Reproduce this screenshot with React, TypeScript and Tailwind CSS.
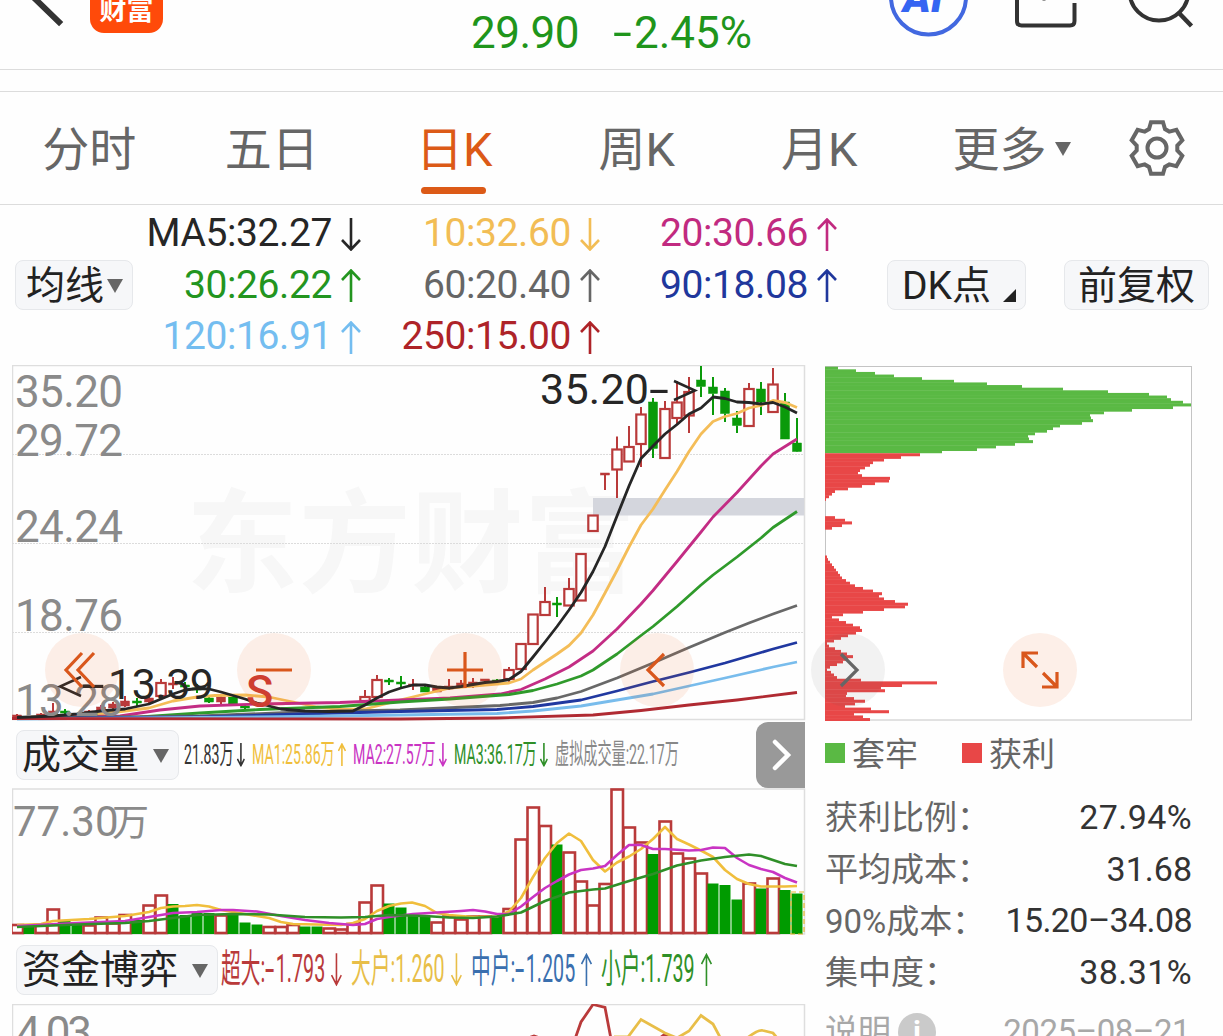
import clsx from "clsx";
import type { ReactNode } from "react";

type Point = [number, number];

// [x, body top, body bottom, high, low, kind]: r = hollow red, s = solid red, g = green
type Candle = [number, number, number, number, number, "r" | "g" | "s"];

const RED = "#b93a3a";
const GREEN = "#0a9a0a";

const tabs = ["分时", "五日", "日K", "周K", "月K"];

const averages = [
  { label: "MA5:32.27", up: false, color: "text-[#262626]" },
  { label: "10:32.60", up: false, color: "text-[#f2bd55]" },
  { label: "20:30.66", up: true, color: "text-[#c12a80]" },
  { label: "30:26.22", up: true, color: "text-[#23951f]" },
  { label: "60:20.40", up: true, color: "text-[#666666]" },
  { label: "90:18.08", up: true, color: "text-[#20379c]" },
  { label: "120:16.91", up: true, color: "text-[#74bdf0]" },
  { label: "250:15.00", up: true, color: "text-[#ae2328]" },
];

const candles: Candle[] = [
  [17, 715, 717, 714, 718, "s"],
  [41, 714, 717, 713, 718, "s"],
  [53, 711, 714, 703, 716, "s"],
  [65, 711, 713, 709, 715, "g"],
  [89, 711, 713, 710, 714, "s"],
  [101, 707, 710, 705, 711, "s"],
  [113, 704, 708, 702, 710, "s"],
  [125, 701, 706, 696, 707, "s"],
  [137, 701, 703, 698, 706, "g"],
  [149, 698, 702, 696, 704, "s"],
  [161, 683, 696, 679, 696, "r"],
  [173, 683, 685, 677, 689, "s"],
  [185, 685, 687, 682, 691, "g"],
  [197, 688, 690, 684, 693, "g"],
  [209, 698, 702, 695, 703, "g"],
  [221, 697, 702, 696, 704, "s"],
  [233, 697, 704, 696, 706, "g"],
  [245, 706, 708, 704, 709, "g"],
  [365, 697, 701, 690, 702, "r"],
  [377, 680, 697, 675, 698, "r"],
  [389, 680, 682, 678, 685, "g"],
  [401, 682, 684, 676, 688, "g"],
  [413, 684, 686, 679, 690, "s"],
  [425, 687, 692, 685, 692, "g"],
  [437, 688, 692, 686, 692, "s"],
  [449, 686, 689, 679, 690, "s"],
  [461, 683, 687, 680, 688, "s"],
  [473, 682, 684, 678, 688, "s"],
  [485, 679, 681, 679, 684, "s"],
  [497, 680, 682, 679, 682, "g"],
  [509, 670, 679, 667, 682, "r"],
  [521, 644, 669, 644, 669, "r"],
  [533, 614.5, 644, 614, 644, "r"],
  [545, 602, 615, 587, 615, "r"],
  [557, 603, 605, 597, 617, "g"],
  [569, 589, 605.5, 578, 606, "r"],
  [581, 554, 600.5, 554, 600, "r"],
  [593, 515.5, 531, 515, 531, "r"],
  [605, 473, 475, 474, 490, "s"],
  [617, 449.5, 469.5, 436.5, 498, "r"],
  [629, 447, 461.5, 426, 461, "r"],
  [641, 414.5, 444, 407, 467, "r"],
  [653, 402, 448.5, 398, 458, "g"],
  [665, 409, 458, 401, 458, "r"],
  [677, 402.5, 418, 381, 424, "r"],
  [689, 392, 415.5, 377, 433, "r"],
  [701, 380, 386.5, 366, 397, "g"],
  [713, 387, 393.5, 377, 415, "g"],
  [725, 391, 413.5, 388, 422, "g"],
  [737, 418, 425.5, 411, 433, "g"],
  [749, 389, 426, 383, 426, "r"],
  [761, 389, 402, 382, 415, "g"],
  [773, 384.5, 412, 368, 412, "r"],
  [785, 402, 439, 393, 439, "g"],
  [797, 443, 451.5, 418, 451, "g"],
];

const priceLines: { color: string; points: Point[] }[] = [
  {
    color: "#f4bd58",
    points: [[17, 718], [101, 714], [149, 708], [173, 701], [197, 697], [215, 695.5], [245, 695], [269, 697], [293, 702], [317, 707], [341, 709.5], [365, 709], [389, 703], [400, 700], [425, 694], [450, 688], [509, 683], [521, 679], [533, 670], [545, 662], [557, 654], [569, 645.5], [581, 633], [593, 615], [605, 593], [617, 570.5], [629, 547], [641, 525], [653, 509], [665, 490], [677, 471.5], [689, 451.5], [701, 434], [713, 421.5], [725, 416.5], [737, 413.5], [749, 408], [761, 405.5], [773, 400.5], [785, 402.5], [797, 407.5]],
  },
  {
    color: "#c32c84",
    points: [[17, 718], [120, 716], [160, 710], [200, 706], [260, 704], [340, 702.5], [400, 700], [450, 698], [500, 694], [521, 689.5], [545, 679], [569, 667], [593, 651], [617, 629], [641, 604], [653, 590.5], [677, 561.5], [701, 532], [713, 517], [737, 492.5], [761, 466], [773, 454], [785, 446.5], [797, 439]],
  },
  {
    color: "#2f9a2b",
    points: [[17, 718], [140, 717], [200, 713], [260, 709.5], [340, 706.5], [400, 702], [450, 699], [509, 694.5], [533, 690.5], [557, 684], [581, 676], [593, 670], [617, 654], [641, 635.5], [653, 626.5], [677, 606.5], [701, 585], [713, 575], [737, 557], [761, 538], [773, 527.5], [797, 511.5]],
  },
  {
    color: "#686868",
    points: [[17, 718.5], [200, 716], [300, 712], [400, 710], [500, 705.5], [533, 702.5], [557, 698], [581, 691.5], [617, 678], [653, 663], [689, 647.5], [725, 632.5], [749, 623], [773, 614], [797, 605.5]],
  },
  {
    color: "#2038a0",
    points: [[17, 718.5], [200, 717], [300, 714], [400, 711.5], [497, 709.5], [533, 706.5], [581, 700], [617, 691], [653, 681.5], [689, 672.5], [725, 663], [773, 649], [797, 642.5]],
  },
  {
    color: "#78bcec",
    points: [[17, 719], [300, 716.5], [400, 715], [497, 713.5], [533, 711], [581, 706], [617, 700], [653, 694], [725, 678], [773, 667], [797, 662]],
  },
  {
    color: "#b02a32",
    points: [[12, 718.5], [400, 719], [497, 718], [593, 715], [641, 710.5], [689, 705], [737, 700], [797, 692.5]],
  },
  {
    color: "#262626",
    points: [[17, 717.5], [53, 716], [77, 714], [101, 711], [125, 709], [149, 704], [161, 699], [173, 694], [185, 690], [197, 688.5], [209, 689], [221, 692], [245, 699], [257, 703], [281, 709], [305, 711], [329, 711.5], [353, 711], [365, 705], [377, 698], [389, 692], [401, 688], [413, 685], [425, 685], [437, 687], [449, 688], [461, 686.5], [473, 684.5], [485, 682.5], [497, 681.5], [509, 679.5], [521, 671.5], [533, 657], [545, 642], [557, 626.5], [569, 610], [581, 592.5], [593, 571.5], [605, 546.5], [617, 516], [629, 486], [641, 458.5], [653, 446], [665, 434], [677, 424.5], [689, 414], [701, 408], [713, 397], [725, 398.5], [737, 402], [749, 402.5], [761, 404], [773, 402.5], [785, 407], [797, 413]],
  },
];

// top edge of each volume bar, 12px apart
const volumeTops = [
  923.5, 927, 923, 908, 920, 924, 924, 916, 922, 913.5, 920, 904, 894, 904, 915, 913, 913, 914, 915, 922.5, 924.5,
  925.5, 925.5, 923.5, 926.5, 926.5, 927, 928, 922.5, 901, 884, 903.5, 907.5, 915, 916.5, 921, 915, 918, 915, 915,
  916.5, 907.5, 838, 806, 824.5, 844.5, 851, 880, 904, 882.5, 788, 826, 841, 854, 820, 852, 857, 872, 883.5, 885,
  899.5, 882, 888.5, 877, 890, 893.5,
];
const volumeColors = "rgrrggrrrrgrrgggg" + "rgggrrrggrrrrr" + "ggggrrrrrgrrrrgrrrrrrrgrrrrgggrgrgg";

const volumeLines: { color: string; points: Point[] }[] = [
  {
    color: "#f0be3c",
    points: [[17, 925], [41, 924], [53, 921], [89, 919], [125, 916], [149, 912], [161, 908], [173, 906.5], [185, 906], [197, 905], [209, 906.5], [221, 910], [245, 914], [257, 916], [269, 918], [281, 922], [293, 924], [341, 925], [353, 923], [365, 919], [377, 911], [389, 906], [401, 903.5], [412, 902.5], [425, 906], [437, 913], [449, 915], [473, 917], [497, 916.5], [509, 911.5], [521, 898], [533, 877], [545, 858], [557, 843], [569, 833.5], [581, 841], [593, 860], [605, 871.5], [617, 862.5], [629, 856.5], [641, 849], [653, 839], [665, 827], [677, 839], [689, 844.5], [701, 850.5], [713, 857], [725, 870], [737, 879], [749, 884], [761, 886.5], [785, 886.5], [797, 886]],
  },
  {
    color: "#c934c3",
    points: [[17, 926], [77, 923], [125, 921], [149, 917], [173, 913], [197, 912], [221, 910], [233, 910], [257, 911.5], [281, 916], [305, 920], [329, 923], [353, 925], [365, 924], [377, 919], [389, 917], [413, 914], [437, 912.5], [461, 911], [473, 910], [485, 911.5], [497, 914], [509, 914], [521, 906.5], [533, 897], [545, 888], [557, 881], [569, 874.5], [581, 870], [593, 868.5], [605, 866], [617, 855], [629, 845], [641, 845], [653, 849], [665, 849], [689, 850.5], [701, 850], [713, 847.5], [725, 848], [737, 858], [749, 865], [761, 869], [773, 872], [785, 878], [797, 882.5]],
  },
  {
    color: "#2f8f28",
    points: [[17, 927], [77, 924.5], [125, 923], [149, 921], [173, 918], [197, 915], [233, 914], [269, 914.5], [305, 917], [341, 917.5], [365, 917], [389, 915], [425, 916], [449, 917.5], [473, 918], [497, 916.5], [521, 912.5], [545, 901], [569, 892.5], [593, 889.5], [605, 888.5], [629, 881], [653, 874], [677, 865.5], [701, 860.5], [725, 857], [749, 854.5], [761, 856], [785, 864], [797, 866]],
  },
];

// chip distribution, one entry per price level from the top
const chips = [
  13, 31, 50, 69, 97, 129, 162, 197, 238, 283, 324, 342, 346, 358, 366, 348, 307, 279, 265, 266, 268, 257, 235, 228,
  222, 210, 203, 204, 208, 190, 171, 152, 117, 95, 76, 59, 48, 45, 40, 35, 33, 37, 65, 64, 50, 37, 23, 10, 7, 4, 1, 0,
  0, 0, 0, 0, 0, 10, 20, 27, 17, 7, 0, 0, 0, 0, 0, 0, 0, 0, 0, 0, 2, 3, 5, 7, 9, 11, 13, 15, 17, 21, 25, 30, 38, 48,
  57, 54, 59, 70, 83, 80, 59, 38, 18, 7, 14, 21, 28, 35, 37, 31, 23, 16, 9, 2, 4, 10, 16, 22, 28, 23, 18, 12, 5, 2, 6,
  9, 12, 36, 112, 77, 56, 60, 22, 21, 29, 40, 30, 20, 46, 64, 29, 38, 45,
];
const TRAPPED_LEVELS = 33;
const LEVEL_HEIGHT = 354 / chips.length;

const costs = [
  { label: "获利比例：", value: "27.94%", tracking: "tracking-[0.4px]" },
  { label: "平均成本：", value: "31.68", tracking: "tracking-normal" },
  { label: "90%成本：", value: "15.20–34.08", tracking: "tracking-[-0.6px]" },
  { label: "集中度：", value: "38.31%", tracking: "tracking-[0.4px]" },
];

const toPoints = (points: Point[]) => points.map((p) => p.join(",")).join(" ");

function Arrow({ up, className, stroke = 2.6 }: { up: boolean; className: string; stroke?: number }) {
  return (
    <svg viewBox="0 0 20 33" preserveAspectRatio="none" className={clsx("shrink-0", className, up || "rotate-180")}>
      <path
        d="M10 33V2M1 11L10 1.5L19 11"
        fill="none"
        stroke="currentColor"
        strokeWidth={stroke}
        vectorEffect="non-scaling-stroke"
      />
    </svg>
  );
}

function Caret() {
  return <span className="h-0 w-0 border-x-8 border-t-[14px] border-x-transparent border-t-[#666666]" />;
}

function Chip({ className, children }: { className: string; children: ReactNode }) {
  return (
    <button
      className={clsx(
        "flex h-[50px] shrink-0 items-center rounded-lg border-[1.5px] border-[#e6e8eb] bg-[#f6f7f9] pt-[2px] text-[39px] leading-none whitespace-nowrap text-[#222222]",
        className,
      )}
    >
      {children}
    </button>
  );
}

function Header() {
  return (
    <header className="flex h-[70px] items-start border-b border-[#dcdcdc]">
      <svg className="ml-[25px] h-8 w-10" viewBox="25 0 40 32">
        <path d="M28 -8L59 22" stroke="#333" strokeWidth="6" strokeLinecap="square" />
      </svg>
      <div className="ml-[25px] flex h-[33px] w-[73px] items-end justify-center overflow-hidden rounded-b-[14px] bg-[#ff4a0a] text-[27px] leading-[44px] font-bold text-white">
        财富
      </div>
      <div className="mt-[7px] ml-[308px] flex w-[284px] items-center gap-[34px] text-[44px] leading-[52px] text-[#1f951b]">
        <span className="tracking-[-0.5px]">29.90</span>
        <span className="whitespace-nowrap">
          <span className="inline-block w-[21px] origin-left scale-x-[1.55]">-</span>2.45%
        </span>
      </div>
      <svg className="ml-[132px] h-10 w-[82px]" viewBox="887 0 82 40">
        <circle cx="928.5" cy="-3" r="37.5" fill="none" stroke="#4268e0" strokeWidth="4" />
        <text x="903" y="12" fontSize="42" fontWeight="900" fontStyle="italic" fill="#3565f2">
          AI
        </text>
      </svg>
      <svg className="ml-[44px] h-8 w-16" viewBox="1013 0 64 32">
        <path d="M1017 -4V21Q1017 25.500 1021.500 25.500H1070Q1074.500 25.500 1074.500 21V3" fill="none" stroke="#333" strokeWidth="4" />
        <path d="M1044 -8V0.500" stroke="#333" strokeWidth="3" />
      </svg>
      <svg className="ml-[48px] h-8 w-[70px]" viewBox="1123 0 70 32">
        <circle cx="1157" cy="-9" r="29.5" fill="none" stroke="#333" strokeWidth="4" />
        <path d="M1177 13L1189.500 26" stroke="#333" strokeWidth="4.500" />
      </svg>
    </header>
  );
}

function Gear() {
  const outline = [0, 60, 120, 180, 240, 300]
    .flatMap((base) => [
      [base - 23, 20.5],
      [base - 13, 26.5],
      [base + 13, 26.5],
      [base + 23, 20.5],
    ])
    .map(([deg, r]) => {
      const a = ((deg - 90) * Math.PI) / 180;
      return `${(30 + r * Math.cos(a)).toFixed(1)},${(30 + r * Math.sin(a)).toFixed(1)}`;
    })
    .join(" ");
  return (
    <svg className="h-[60px] w-[60px]" viewBox="0 0 60 60" fill="none" stroke="#666" strokeWidth="4">
      <polygon points={outline} />
      <circle cx="30" cy="30" r="9.5" />
    </svg>
  );
}

function PeriodTabs() {
  return (
    <nav className="mt-[21px] flex h-[114px] items-center border-y border-[#dcdcdc] text-[47px] leading-none text-[#666666]">
      {tabs.map((tab) => (
        <button
          key={tab}
          className={clsx(
            "relative flex h-full w-[182.5px] items-center justify-center pt-[3px] pr-[4px]",
            tab === "日K" && "text-[#dc5a17]",
          )}
        >
          {tab}
          {tab === "日K" && <span className="absolute bottom-[10px] left-[56px] h-[7px] w-[65px] rounded-full bg-[#dc5a17]" />}
        </button>
      ))}
      <button className="ml-[40px] flex items-center gap-2 pt-[2px]">
        更多
        <Caret />
      </button>
      <button className="ml-[56px]">
        <Gear />
      </button>
    </nav>
  );
}

function Averages() {
  return (
    <section className="flex h-[160px] items-center pl-[15px]">
      <Chip className="w-[118px] gap-[3px] pl-[10px]">
        均线
        <Caret />
      </Chip>
      <div className="grid grid-cols-[228px_239px_237px] pt-[1px] text-[39px] leading-[51.5px] tracking-[-0.4px]">
        {averages.map((a) => (
          <div key={a.label} className={clsx("flex items-center justify-end gap-[9px]", a.color)}>
            {a.label}
            <Arrow up={a.up} className="h-[33px] w-[20px]" />
          </div>
        ))}
      </div>
      <Chip className="ml-[50px] w-[139px] pl-[14px]">
        DK点
        <svg className="mt-[19px] ml-[12px] h-[13px] w-[13px]" viewBox="0 0 13 13">
          <path d="M13 0V13H0Z" fill="#222" />
        </svg>
      </Chip>
      <Chip className="ml-[38px] w-[145px] justify-center">前复权</Chip>
    </section>
  );
}

function PriceChart() {
  return (
    <svg className="block h-[356px] w-[794px]" viewBox="12 365 794 356">
      <text
        x="186"
        y="584"
        fontSize="112"
        fontWeight="bold"
        fill="#f7f7f7"
        textLength="450"
        fontFamily="'Noto Sans CJK SC', sans-serif"
      >
        东方财富
      </text>
      <rect x="12.5" y="365.5" width="792" height="354" fill="none" stroke="#dedede" strokeWidth="1.5" />
      {[454.5, 543.5, 632.5].map((y) => (
        <path key={y} d={`M12 ${y}H804`} stroke="#dcdcdc" strokeDasharray="2 1" />
      ))}
      <rect x="593" y="498" width="211" height="17.500" fill="#d4d6dd" />
      {candles.map(([x, top, bottom, high, low, kind]) => {
        const color = kind === "g" ? GREEN : RED;
        return (
          <g key={x} stroke={color}>
            <path d={`M${x} ${high}V${top}M${x} ${bottom}V${low}`} strokeWidth="2" />
            {kind === "r" ? (
              <rect x={x - 4.7} y={top} width="9.4" height={bottom - top} fill="white" strokeWidth="2.2" />
            ) : (
              <rect x={x - 4.5} y={top} width="9" height={bottom - top} fill={color} strokeWidth="0.5" />
            )}
          </g>
        );
      })}
      {priceLines.map((line) => (
        <polyline
          key={line.color}
          points={toPoints(line.points)}
          fill="none"
          stroke={line.color}
          strokeWidth="2.8"
          strokeLinejoin="round"
        />
      ))}
      <g fontSize="44" fill="#8a8a8a">
        <text x="15" y="406.5" textLength="108">35.20</text>
        <text x="15" y="456" textLength="108">29.72</text>
        <text x="15" y="542" textLength="108">24.24</text>
        <text x="15" y="631" textLength="108">18.76</text>
        <text x="15" y="716" textLength="108">13.28</text>
      </g>
      <g fontSize="43" fill="#262626">
        <text x="540" y="404" textLength="109">35.20</text>
        <text x="649" y="404" textLength="20" lengthAdjust="spacingAndGlyphs">-</text>
        <text x="108" y="699" textLength="106">13.39</text>
        <text x="81" y="699" textLength="24" lengthAdjust="spacingAndGlyphs">-</text>
      </g>
      <path d="M674 381L695 390.500L674 400M81 677L60 686.500L81 696" fill="none" stroke="#262626" strokeWidth="2.5" />
      <text x="246" y="706.500" fontSize="45" fontWeight="500" fill="#cb3a33">S</text>
    </svg>
  );
}

function VolumeChart() {
  return (
    <svg className="block h-[147px] w-[794px]" viewBox="12 788 794 147">
      <rect x="12.5" y="789" width="792" height="145" fill="none" stroke="#dedede" strokeWidth="1.5" />
      <text x="13" y="836" fontSize="42" fill="#8a8a8a">
        77.30<tspan x="112" fontSize="37">万</tspan>
      </text>
      {volumeTops.map((top, i) => {
        const x = 17 + i * 12;
        return volumeColors[i] === "g" ? (
          <rect key={x} x={x - 5.5} y={top} width="11" height={934 - top} fill="#009b00" />
        ) : (
          <rect key={x} x={x - 5.5} y={top + 1.5} width="11.500" height={931.500 - top} fill="white" stroke={RED} strokeWidth="2.6" />
        );
      })}
      <rect x="791" y="892" width="13" height="42" fill="none" stroke="#e8b830" strokeDasharray="5 3" strokeWidth="1.2" />
      {volumeLines.map((line) => (
        <polyline
          key={line.color}
          points={toPoints(line.points)}
          fill="none"
          stroke={line.color}
          strokeWidth="2.6"
          strokeLinejoin="round"
        />
      ))}
    </svg>
  );
}

function FundChart() {
  return (
    <svg className="mt-[9px] block h-[33px] w-[794px]" viewBox="12 1003 794 33">
      <path d="M12.500 1040V1003.500H804.500V1040" fill="none" stroke="#dedede" strokeWidth="1.5" />
      <text x="16" y="1046.500" fontSize="44" fill="#8a8a8a" textLength="76">
        4.03
      </text>
      <g fill="none" strokeWidth="2.8">
        <path d="M575 1038L581 1021L593 1003.500L605 1006.500L611 1038" stroke="#b93a3a" />
        <path d="M528 1037L534 1035L540 1037M661 1036L665 1033L677 1038" stroke="#b93a3a" />
        <path d="M614 1036H628L641 1018.500L665 1032L677 1037L689 1030L701 1014.500L713 1023L721 1038" stroke="#e8be48" />
        <path d="M746 1038Q758 1028 763 1029.500L773 1032L778 1038" stroke="#e8be48" />
      </g>
    </svg>
  );
}

// Half-width readout used in the indicator title rows
function Readout({ className, color, up, children }: { className: string; color: string; up?: boolean; children: ReactNode }) {
  return (
    <div className={clsx("flex shrink-0 items-center whitespace-nowrap", className, color)}>
      <span className="w-0 flex-1">
        <span className="inline-block origin-left scale-x-[0.505]">{children}</span>
      </span>
      {up !== undefined && <Arrow up={up} stroke={1.6} className="h-[0.85em] w-[0.28em]" />}
    </div>
  );
}

function VolumeTitle() {
  return (
    <div className="flex h-[67px] items-center pl-1">
      <Chip className="w-[163px] gap-[14px] pl-[5px]">
        成交量
        <Caret />
      </Chip>
      <div className="ml-[5px] flex flex-1 gap-[7px] text-[28px]">
        <Readout className="w-[61px]" color="text-[#333333]" up={false}>21.83万</Readout>
        <Readout className="w-[94px]" color="text-[#f0be3c]" up>MA1:25.86万</Readout>
        <Readout className="w-[94px]" color="text-[#c934c3]" up={false}>MA2:27.57万</Readout>
        <Readout className="w-[94px]" color="text-[#2f8f28]" up={false}>MA3:36.17万</Readout>
        <Readout className="w-[123px]" color="text-[#888888]">虚拟成交量:22.17万</Readout>
      </div>
      <button className="flex h-[66px] w-[49px] items-center justify-center rounded-l-xl bg-[#999999]">
        <svg className="h-[34px] w-[22px]" viewBox="0 0 22 34">
          <path d="M5 4L18 17L5 30" fill="none" stroke="white" strokeWidth="4.500" strokeLinecap="round" />
        </svg>
      </button>
    </div>
  );
}

function Minus() {
  return <span className="inline-block w-[21px] origin-left scale-x-[1.7]">-</span>;
}

function FundTitle() {
  return (
    <div className="mt-[9px] flex h-[51px] items-center pl-1">
      <Chip className="w-[202px] gap-[14px] pl-[5px]">
        资金博弈
        <Caret />
      </Chip>
      <div className="ml-[3px] flex gap-[9px] text-[39px] leading-none">
        <Readout className="w-[121px]" color="text-[#b93a3a]" up={false}>超大:<Minus />1.793</Readout>
        <Readout className="w-[111px]" color="text-[#e8be48]" up={false}>大户:1.260</Readout>
        <Readout className="w-[121px]" color="text-[#3a6fae]" up>中户:<Minus />1.205</Readout>
        <Readout className="w-[111px]" color="text-[#2f9028]" up>小户:1.739</Readout>
      </div>
    </div>
  );
}

function ChipPanel() {
  return (
    <aside className="w-[367px] text-[33px] leading-none text-[#666666]">
      <svg className="block h-[356px] w-[367px]" viewBox="825 365 367 356">
        <rect x="825.5" y="366.500" width="366" height="353.500" fill="white" stroke="#c4c4c4" />
        {chips.map((width, i) => (
          <rect
            key={i}
            x="825"
            y={366.7 + i * LEVEL_HEIGHT}
            width={width}
            height={width && LEVEL_HEIGHT + (i === TRAPPED_LEVELS - 1 ? 0 : 0.4)}
            fill={i < TRAPPED_LEVELS ? "#5ab944" : "#e84747"}
          />
        ))}
      </svg>
      <div className="mt-[14px] flex h-9 items-center">
        <span className="mr-[7px] h-5 w-5 bg-[#5ab944]" />
        <span className="pt-[2px]">套牢</span>
        <span className="mr-[7px] ml-[44px] h-5 w-5 bg-[#e84747]" />
        <span className="pt-[2px]">获利</span>
      </div>
      <dl className="mt-[20px]">
        {costs.map((c) => (
          <div key={c.label} className="flex h-[51.700px] items-center justify-between">
            <dt className="pt-[2px]">{c.label}</dt>
            <dd className={clsx("text-[34px] text-[#333333]", c.tracking)}>{c.value}</dd>
          </div>
        ))}
      </dl>
      <div className="mt-[14px] flex h-10 items-center text-[#a8a8a8]">
        说明
        <span className="ml-[7px] flex h-[38px] w-[38px] items-center justify-center rounded-full bg-[#cacaca] text-[30px] font-bold text-white">
          i
        </span>
        <span className="mr-[2px] ml-auto text-[33px] tracking-[-0.5px]">2025–08–21</span>
      </div>
    </aside>
  );
}

const controls = [
  "M66 -17L50 0L66 17M78 -17L62 0L78 17",
  "M-18 0H18",
  "M-18 0H18M0 -18V18",
  "M7 -16L-9 0L7 16",
  "M-7 -16L9 0L-7 16",
  "M-17 -2V-17H-2M-16 -16L-3 -3M17 2V17H2M16 16L3 3",
];

function ChartControls() {
  return (
    <div className="absolute top-[268px] left-[45px] flex gap-[117.500px]">
      {controls.map((d, i) => (
        <button
          key={d}
          className={clsx(
            "h-[74px] w-[74px] rounded-full",
            i === 4 ? "bg-[#555555]/8 text-[#666666]" : "bg-[#e86420]/10 text-[#d9571c]",
          )}
        >
          <svg viewBox={i === 0 ? "29 -37 74 74" : "-37 -37 74 74"} className="h-full w-full">
            <path d={d} fill="none" stroke="currentColor" strokeWidth="3.200" />
          </svg>
        </button>
      ))}
    </div>
  );
}

export default function App() {
  return (
    <main className="h-[1036px] w-[1223px] overflow-hidden bg-[#fefefe] font-[family-name:Roboto,'Noto_Sans_CJK_SC',sans-serif]">
      <Header />
      <PeriodTabs />
      <Averages />
      <div className="relative flex gap-5 pl-3">
        <div className="w-[793px]">
          <PriceChart />
          <VolumeTitle />
          <VolumeChart />
          <FundTitle />
          <FundChart />
        </div>
        <ChipPanel />
        <ChartControls />
      </div>
    </main>
  );
}
